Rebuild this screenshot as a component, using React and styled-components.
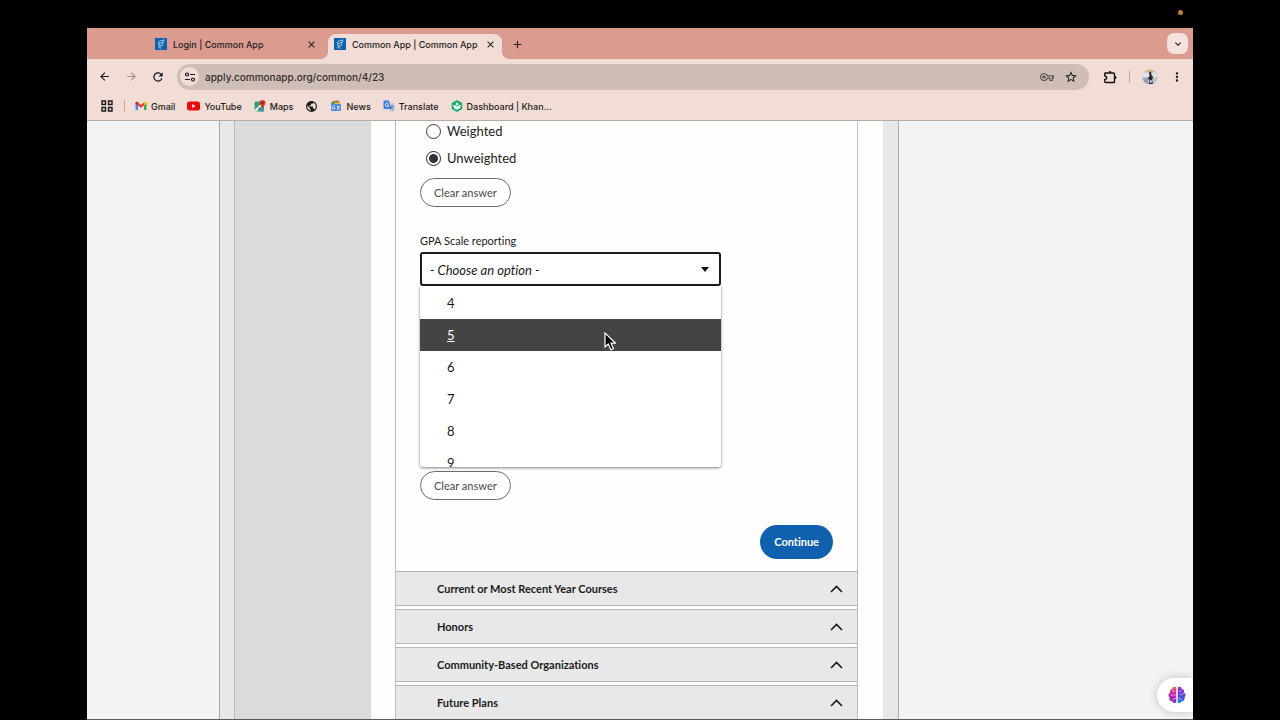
import { useState } from "react";
import styled, { createGlobalStyle } from "styled-components";
import {
  MdArrowBack,
  MdArrowForward,
  MdRefresh,
  MdOutlineVpnKey,
  MdStarBorder,
  MdMoreVert,
  MdClose,
  MdAdd,
  MdPublic,
  MdKeyboardArrowDown,
} from "react-icons/md";

const GlobalStyle = createGlobalStyle`
  * {
    box-sizing: border-box;
  }

  body {
    margin: 0;
    background: #000;
    font-family: Inter, "Liberation Sans", sans-serif;
    color: #1b1b1b;
  }

  button, select, input {
    font-family: inherit;
    color: inherit;
    margin: 0;
  }

  svg {
    flex-shrink: 0;
  }
`;

/* ---------- drawings ---------- */

const CommonAppLogo = () => (
  <svg width="12" height="12" viewBox="0 0 24 24" fill="none" stroke="#d6ebf8" strokeWidth="1.600" strokeLinejoin="round" strokeLinecap="round">
    <rect width="24" height="24" fill="#0c62ad" stroke="none" />
    <path d="M18 4C13 5 8 6 6.500 8.500C5.500 10.500 7 11.500 9 11L16 9.500" />
    <path d="M17.500 5.500L15.500 9.500M9 11.500c-2 2-2 4-1 5.500M8 19.500l4 .5M9 16l5-.5 1.500-3" />
  </svg>
);

const TuneIcon = () => (
  <svg width="12" height="12" viewBox="0 0 24 24" fill="none" stroke="#1c1718" strokeWidth="2.400" strokeLinecap="round">
    <circle cx="6" cy="7" r="3" />
    <path d="M13 7h8M3 17h8" />
    <circle cx="18" cy="17" r="3" />
  </svg>
);

const AppsIcon = () => (
  <svg width="14" height="14" viewBox="0 0 28 28" fill="none" stroke="#1c1718" strokeWidth="2.800">
    <path d="M4 4h7v7H4zM17 4h7v7h-7zM4 17h7v7H4zM17 17h7v7h-7z" />
  </svg>
);

const PuzzleIcon = () => (
  <svg width="14" height="14" viewBox="0 0 28 28" fill="none" stroke="#111" strokeWidth="2.800" strokeLinejoin="round">
    <path d="M4 6h17q2 0 2 2v16q0 1-1 1H5q-1.500 0-1.500-1.500V19q4-.5 4-3.500t-4-3.500V7z" />
    <path d="M11 5a3 3 0 0 1 6 0zM24 12a3 3 0 0 1 0 6z" fill="#111" stroke="none" />
  </svg>
);

const GmailIcon = () => (
  <svg width="12" height="12" viewBox="0 0 24 24">
    <path d="M1 5.500v13c0 .8.700 1.500 1.500 1.500H6V9z" fill="#4285f4" />
    <path d="M23 5.500v13c0 .8-.7 1.500-1.500 1.500H18V9z" fill="#34a853" />
    <path d="M18 5l-6 4.600L6 5v6l6 4.500 6-4.500z" fill="#ea4335" />
    <path d="M6 5L4.500 4C3 3 1 4 1 6v1.300L6 11z" fill="#c5221f" />
    <path d="M18 5l1.500-1C21 3 23 4 23 6v1.300L18 11z" fill="#fbbc04" />
  </svg>
);

const YoutubeIcon = () => (
  <svg width="13" height="12" viewBox="0 0 26 24">
    <rect x="0" y="3" width="26" height="18" rx="5" fill="#f00909" />
    <path d="M10.500 8.200v7.600l6.500-3.800z" fill="#fff" />
  </svg>
);

const MapsIcon = () => (
  <svg width="12" height="12" viewBox="0 0 24 24">
    <rect x="1" y="3" width="19" height="20" rx="3" fill="#34a268" />
    <path d="M1 20L18 4h2v3L5 23H3z" fill="#f6f1e4" />
    <path d="M11 14l9 9h-5l-7-6z" fill="#4a84e8" />
    <path d="M17 0a6 6 0 0 0-6 6c0 4 4.500 6 6 11 1.500-5 6-7 6-11a6 6 0 0 0-6-6z" fill="#d9342b" />
    <circle cx="17" cy="6" r="2.200" fill="#7d130e" />
  </svg>
);

const NewsIcon = () => (
  <svg width="12" height="12" viewBox="0 0 24 24">
    <path d="M5 2l13-1 2 9H5z" fill="#e6534a" />
    <path d="M2 5l14-3v10H3z" fill="#39a05d" />
    <path d="M9 5h12v8H9z" fill="#e9b93c" />
    <rect x="2" y="8" width="20" height="14" rx="2" fill="#4f8ae0" />
    <path d="M9.500 13a3 3 0 1 0 .5 3H8M14 13h5M14 15.500h5M14 18h5" stroke="#fff" strokeWidth="1.500" fill="none" />
  </svg>
);

const TranslateIcon = () => (
  <svg width="12" height="12" viewBox="0 0 24 24">
    <path d="M11 7h10a2 2 0 0 1 2 2v12a2 2 0 0 1-2 2h-7z" fill="#b9c4d8" />
    <path d="M15 13h7M18.500 11v2c-.5 3-2 4.500-4 6M16 15c1 2 2.500 3.500 5 4.500" stroke="#4c6fae" strokeWidth="1.400" fill="none" />
    <path d="M3 1h9l5 17H3a2 2 0 0 1-2-2V3a2 2 0 0 1 2-2z" fill="#3f7de6" />
    <path d="M11 7.500A3.500 3.500 0 1 0 11.700 10H8.500" stroke="#fff" strokeWidth="1.600" fill="none" />
  </svg>
);

const KhanIcon = () => (
  <svg width="12" height="12" viewBox="0 0 24 24">
    <path d="M12 0l10.500 6v12L12 24 1.500 18V6z" fill="#17ad6c" />
    <circle cx="12" cy="8" r="2.600" fill="#fff" />
    <path d="M4.500 10c4.500 0 7 2 7.500 4.500C12.500 12 15 10 19.500 10c0 5-3 9-7.500 9s-7.500-4-7.500-9z" fill="#fff" />
  </svg>
);

const Avatar = () => (
  <svg width="16" height="16" viewBox="0 0 32 32">
    <clipPath id="avatarClip">
      <circle cx="16" cy="16" r="15" />
    </clipPath>
    <g clipPath="url(#avatarClip)">
      <rect width="32" height="32" fill="#b9c3d0" />
      <rect width="32" height="7" fill="#d8b98e" />
      <rect y="7" width="32" height="9" fill="#e3e2e4" />
      <path d="M0 19h12v13H0z" fill="#8e9fb4" />
      <path d="M14 6l4-1 1 7 3 4-2 6 2 8h-8l1-8-4-4 4-3z" fill="#292a31" />
      <path d="M17 22l3 1-1 5-3-1zM23 13l4 4-3 2z" fill="#e9e9ee" />
    </g>
  </svg>
);

const BrainIcon = () => (
  <svg width="20" height="20" viewBox="0 0 40 40">
    <defs>
      <linearGradient id="brainLeft" x1="0" y1="0" x2="0" y2="1">
        <stop offset="0" stopColor="#ee6a3c" />
        <stop offset="0.400" stopColor="#c62aa6" />
        <stop offset="1" stopColor="#7b2fd9" />
      </linearGradient>
      <linearGradient id="brainRight" x1="0" y1="0" x2="0" y2="1">
        <stop offset="0" stopColor="#a22cd2" />
        <stop offset="0.600" stopColor="#5048dc" />
        <stop offset="1" stopColor="#168fe8" />
      </linearGradient>
    </defs>
    <path d="M18.500 5c-3-3-8-1-8 3-4 0-6 4-4 7-4 2-5 7-1.500 10-1 5 2 8 6 8 2 4 7 4 7.500 1z" fill="url(#brainLeft)" />
    <path d="M21.500 5c3-3 8-1 8 3 4 0 6 4 4 7 4 2 5 7 1.500 10 1 5-2 8-6 8-2 4-7 4-7.500 1z" fill="url(#brainRight)" />
    <path d="M11 10c1 2 2 3 4 3M8 20h9M18 27c-4-1-6 1-6 3M29 10c-1 2-2 3-4 3M33 17c-2 3-5 3-7 2M23 26c3-1 5 1 5 3" stroke="#e9b9f2" strokeWidth="1.400" fill="none" strokeLinecap="round" />
  </svg>
);

const Chevron = () => (
  <svg width="13" height="8" viewBox="0 0 13 8" fill="none" stroke="#17191c" strokeWidth="1.600">
    <path d="M1 7L6.500 1.500L12 7" />
  </svg>
);

const Pointer = styled(({ className }) => (
  <svg className={className} width="12" height="19" viewBox="0 0 12 19">
    <path d="M1 1v14l3.300-3 2.500 5.700 2.600-1.100-2.400-5.500h4.400z" fill="#000" stroke="#fff" strokeWidth="1.200" />
  </svg>
))`
  position: absolute;
  left: 61%;
  top: 80px;
  pointer-events: none;
`;

/* ---------- browser ---------- */

const Screen = styled.div`
  height: 100vh;
  padding: 28px 87px 0;
  position: relative;
`;

const RecordingDot = styled.span`
  position: absolute;
  top: 10px;
  right: 97px;
  width: 5px;
  height: 5px;
  border-radius: 50%;
  background: #c4802e;
`;

const Window = styled.div`
  height: 100%;
  display: flex;
  flex-direction: column;
  overflow: hidden;
  background: #f2dcd6;
  border-bottom: 1px solid #5a5a5a;
`;

const TabStrip = styled.div`
  display: flex;
  align-items: flex-end;
  height: 31px;
  padding: 0 5px 0 60px;
  background: #dc9b8f;
`;

const Tab = styled.div`
  position: relative;
  display: flex;
  align-items: center;
  width: ${(p) => (p.$active ? "174px" : "181px")};
  height: 25px;
  padding: ${(p) => (p.$active ? "0 5px 5px 6px" : "0 10px 5px 8px")};
  border-radius: 8px 8px 0 0;
  background: ${(p) => (p.$active ? "#f2dcd6" : "transparent")};
  font-size: 9px;
  font-weight: 500;

  & > span {
    flex: 1;
    margin-left: 6px;
    white-space: nowrap;
  }

  &::before,
  &::after {
    content: "";
    display: ${(p) => (p.$active ? "block" : "none")};
    position: absolute;
    bottom: 0;
    width: 8px;
    height: 8px;
  }

  &::before {
    right: 100%;
    background: radial-gradient(circle at 0 0, transparent 8px, #f2dcd6 8px);
  }

  &::after {
    left: 100%;
    background: radial-gradient(circle at 100% 0, transparent 8px, #f2dcd6 8px);
  }
`;

const IconButton = styled.button`
  display: flex;
  align-items: center;
  justify-content: center;
  flex-shrink: 0;
  width: ${(p) => p.$size || 14}px;
  height: ${(p) => p.$size || 14}px;
  padding: 0;
  border: 0;
  background: none;
  color: ${(p) => p.$color || "#1c1718"};
`;

const NewTab = styled(IconButton)`
  margin: 0 auto 8px 8px;
`;

const TabSearch = styled(IconButton)`
  align-self: center;
  border-radius: 7px;
  background: #f5e2de;
`;

const Toolbar = styled.div`
  display: flex;
  align-items: center;
  gap: 12px;
  height: 35px;
  padding: 0 9px 0 10px;
  border-radius: 6px 6px 0 0;
`;

const NavButtons = styled.div`
  display: flex;
  gap: 13px;
`;

const AddressBar = styled.div`
  flex: 1;
  display: flex;
  align-items: center;
  height: 26px;
  margin-right: 2px;
  padding: 0 11px 0 3px;
  border-radius: 13px;
  background: #cfbeb8;
`;

const SiteInfo = styled(IconButton)`
  border-radius: 50%;
  background: #f2dcd6;
`;

const Url = styled.input`
  flex: 1;
  min-width: 0;
  padding: 0 0 0 6px;
  border: 0;
  outline: 0;
  background: none;
  font-size: 10px;
  font-weight: 500;
  color: #332c2b;
`;

const AddressActions = styled.div`
  display: flex;
  gap: 10px;
`;

const Divider = styled.span`
  width: 1px;
  height: 12px;
  background: #dc9b8f;
`;

const Bookmarks = styled.nav`
  display: flex;
  align-items: center;
  gap: 12px;
  height: 27px;
  padding: 0 13px 2px;
  border-bottom: 1px solid #b9aaa6;
  font-size: 9px;
  font-weight: 500;
`;

const BookmarkApps = styled.div`
  display: flex;
  align-items: center;
  gap: 10px;
  margin-right: -2px;
`;

const Bookmark = styled.a`
  display: flex;
  align-items: center;
  gap: 4px;
  color: inherit;
  text-decoration: none;
  white-space: nowrap;
`;

/* ---------- page ---------- */

const Page = styled.div`
  position: relative;
  flex: 1;
  min-height: 0;
  display: grid;
  grid-template-columns: 132fr 680fr 294fr;
  overflow: hidden;
  background: #f3f3f3;
  font-family: Lato, "Liberation Sans", sans-serif;
  font-variant-ligatures: none;
`;

const Site = styled.div`
  grid-column: 2;
  display: grid;
  grid-template-columns: 151fr 512fr;
  padding-right: 15px;
  border: solid #a9a9ab;
  border-width: 0 1px;
  background: #e8e8e8;
`;

const SideNav = styled.aside`
  margin-left: 14px;
  border-left: 1px solid #b9b9ba;
  background: #dbdbdb;
`;

const Content = styled.main`
  padding: 0 25px 0 24px;
  background: #fefefe;
`;

const Card = styled.div`
  border: solid #bcbcc4;
  border-width: 0 1px;
`;

const Form = styled.form`
  display: flex;
  flex-direction: column;
  align-items: flex-start;
  padding: 0 24px 12px;
`;

const Choice = styled.label`
  display: flex;
  align-items: center;
  gap: 6px;
  height: 20px;
  margin: 0 0 7px 6px;
  font-size: 13px;
  color: #222;

  input {
    appearance: none;
    width: 15px;
    height: 15px;
    border: 1px solid #3c3c3c;
    border-radius: 50%;
    background: #fff;
  }

  input:checked {
    border-color: #222;
    background: radial-gradient(circle, #333 4px, #fff 5px);
  }
`;

const ClearButton = styled.button`
  height: 29px;
  margin-top: 3px;
  padding: 0 13px;
  border: 1px solid #6b6b6b;
  border-radius: 15px;
  background: #fff;
  font-size: 11px;
  font-weight: 500;
  color: #555;
`;

const Field = styled.div`
  width: 301px;
  max-width: 100%;
  min-height: 235px;
  margin-top: 26px;
`;

const FieldLabel = styled.label`
  display: block;
  height: 19px;
  font-size: 11px;
  line-height: 16px;
`;

const SelectBox = styled.div`
  position: relative;
`;

const Select = styled.select`
  appearance: none;
  display: block;
  width: 100%;
  height: 34px;
  padding: 1px 8px 0;
  border: 2px solid #1b1b1b;
  border-radius: 3px;
  outline: 0;
  background: #fff;
  font-size: 13px;
  font-style: italic;
  font-variant-ligatures: none;
`;

const Caret = styled.span`
  position: absolute;
  top: 15px;
  right: 12px;
  border: 4px solid transparent;
  border-top: 5px solid #111;
  border-bottom: 0;
  pointer-events: none;
`;

const OptionList = styled.ul`
  position: absolute;
  top: 100%;
  left: 0;
  right: 0;
  height: 181px;
  margin: 0;
  padding: 1px 0 0;
  overflow: hidden;
  list-style: none;
  border-radius: 0 0 3px 3px;
  background: #fff;
  box-shadow: 0 1px 3px rgba(0, 0, 0, 0.5);
`;

const Option = styled.li`
  height: 32px;
  padding-left: 27px;
  font-size: 13px;
  line-height: 32px;
  color: ${(p) => (p.$active ? "#fff" : "#1b1b1b")};
  background: ${(p) => (p.$active ? "#444" : "transparent")};
  text-decoration: ${(p) => (p.$active ? "underline" : "none")};
`;

const ContinueButton = styled.button`
  align-self: flex-end;
  height: 34px;
  margin-top: 25px;
  padding: 0 14px 2px;
  border: 0;
  border-radius: 17px;
  background: #0f60ae;
  color: #fff;
  font-size: 11px;
  font-weight: 700;
  font-variant-ligatures: none;
`;

const Sections = styled.div`
  display: flex;
  flex-direction: column;
  gap: 3px;
`;

const SectionHeader = styled.button`
  display: flex;
  align-items: center;
  justify-content: space-between;
  height: 35px;
  padding: 0 14px 0 41px;
  border: solid #b4b4bc;
  border-width: 1px 0;
  background: #e8e8e8;
  font-size: 11px;
  font-weight: 700;
  font-variant-ligatures: none;
`;

const Assistant = styled.button`
  position: absolute;
  right: 0;
  bottom: 7px;
  display: flex;
  align-items: center;
  height: 34px;
  padding: 0 6px 0 10px;
  border: 0;
  border-radius: 17px 0 0 17px;
  background: #fff;
  box-shadow: 0 0 8px rgba(0, 0, 0, 0.2);
`;

const bookmarks = [
  { label: "Gmail", icon: <GmailIcon /> },
  { label: "YouTube", icon: <YoutubeIcon /> },
  { label: "Maps", icon: <MapsIcon /> },
  { label: "", icon: <MdPublic size={13} /> },
  { label: "News", icon: <NewsIcon /> },
  { label: "Translate", icon: <TranslateIcon /> },
  { label: "Dashboard | Khan...", icon: <KhanIcon /> },
];

const sections = [
  "Current or Most Recent Year Courses",
  "Honors",
  "Community-Based Organizations",
  "Future Plans",
];

const Browser = () => (
  <>
    <TabStrip>
      <Tab>
        <CommonAppLogo />
        <span>Login | Common App</span>
        <IconButton aria-label="Close tab"><MdClose size={11} /></IconButton>
      </Tab>
      <Tab $active>
        <CommonAppLogo />
        <span>Common App | Common App</span>
        <IconButton aria-label="Close tab"><MdClose size={11} /></IconButton>
      </Tab>
      <NewTab aria-label="New tab"><MdAdd size={13} /></NewTab>
      <TabSearch $size={21} aria-label="Search tabs"><MdKeyboardArrowDown size={12} /></TabSearch>
    </TabStrip>
    <Toolbar>
      <NavButtons>
        <IconButton aria-label="Back"><MdArrowBack size={13} /></IconButton>
        <IconButton aria-label="Forward" $color="#a18f8b"><MdArrowForward size={13} /></IconButton>
        <IconButton aria-label="Reload"><MdRefresh size={14} /></IconButton>
      </NavButtons>
      <AddressBar>
        <SiteInfo $size={19} aria-label="Site information"><TuneIcon /></SiteInfo>
        <Url aria-label="Address" defaultValue="apply.commonapp.org/common/4/23" />
        <AddressActions>
          <IconButton aria-label="Passwords" $color="#5d514f"><MdOutlineVpnKey size={14} /></IconButton>
          <IconButton aria-label="Bookmark"><MdStarBorder size={14} /></IconButton>
        </AddressActions>
      </AddressBar>
      <IconButton aria-label="Extensions"><PuzzleIcon /></IconButton>
      <Divider />
      <IconButton $size={16} aria-label="Profile"><Avatar /></IconButton>
      <IconButton aria-label="Menu"><MdMoreVert size={14} /></IconButton>
    </Toolbar>
    <Bookmarks>
      <BookmarkApps>
        <IconButton aria-label="Apps"><AppsIcon /></IconButton>
        <Divider />
      </BookmarkApps>
      {bookmarks.map((b, i) => (
        <Bookmark key={i} href="#" aria-label={b.label || "Website"}>
          {b.icon}
          {b.label}
        </Bookmark>
      ))}
    </Bookmarks>
  </>
);

const GpaForm = () => {
  const [weighting, setWeighting] = useState("Unweighted");
  const [active, setActive] = useState(5);

  return (
    <Form onSubmit={(e) => e.preventDefault()}>
      {["Weighted", "Unweighted"].map((name) => (
        <Choice key={name}>
          <input
            type="radio"
            name="weighting"
            checked={weighting === name}
            onChange={() => setWeighting(name)}
          />
          {name}
        </Choice>
      ))}
      <ClearButton type="button" onClick={() => setWeighting("")}>Clear answer</ClearButton>
      <Field>
        <FieldLabel htmlFor="scale">GPA Scale reporting</FieldLabel>
        <SelectBox>
          <Select id="scale">
            <option>- Choose an option -</option>
          </Select>
          <Caret />
          <OptionList role="listbox" aria-label="GPA Scale reporting">
            {[4, 5, 6, 7, 8, 9].map((n) => (
              <Option
                key={n}
                role="option"
                aria-selected={n === active}
                $active={n === active}
                onMouseEnter={() => setActive(n)}
              >
                {n}
              </Option>
            ))}
          </OptionList>
          <Pointer />
        </SelectBox>
      </Field>
      <ClearButton type="button">Clear answer</ClearButton>
      <ContinueButton>Continue</ContinueButton>
    </Form>
  );
};

export default function App() {
  return (
    <Screen>
      <GlobalStyle />
      <RecordingDot />
      <Window>
        <Browser />
        <Page>
          <Site>
            <SideNav />
            <Content>
              <Card>
                <GpaForm />
                <Sections>
                  {sections.map((title) => (
                    <SectionHeader key={title}>
                      {title}
                      <Chevron />
                    </SectionHeader>
                  ))}
                </Sections>
              </Card>
            </Content>
          </Site>
          <Assistant aria-label="Assistant"><BrainIcon /></Assistant>
        </Page>
      </Window>
    </Screen>
  );
}
